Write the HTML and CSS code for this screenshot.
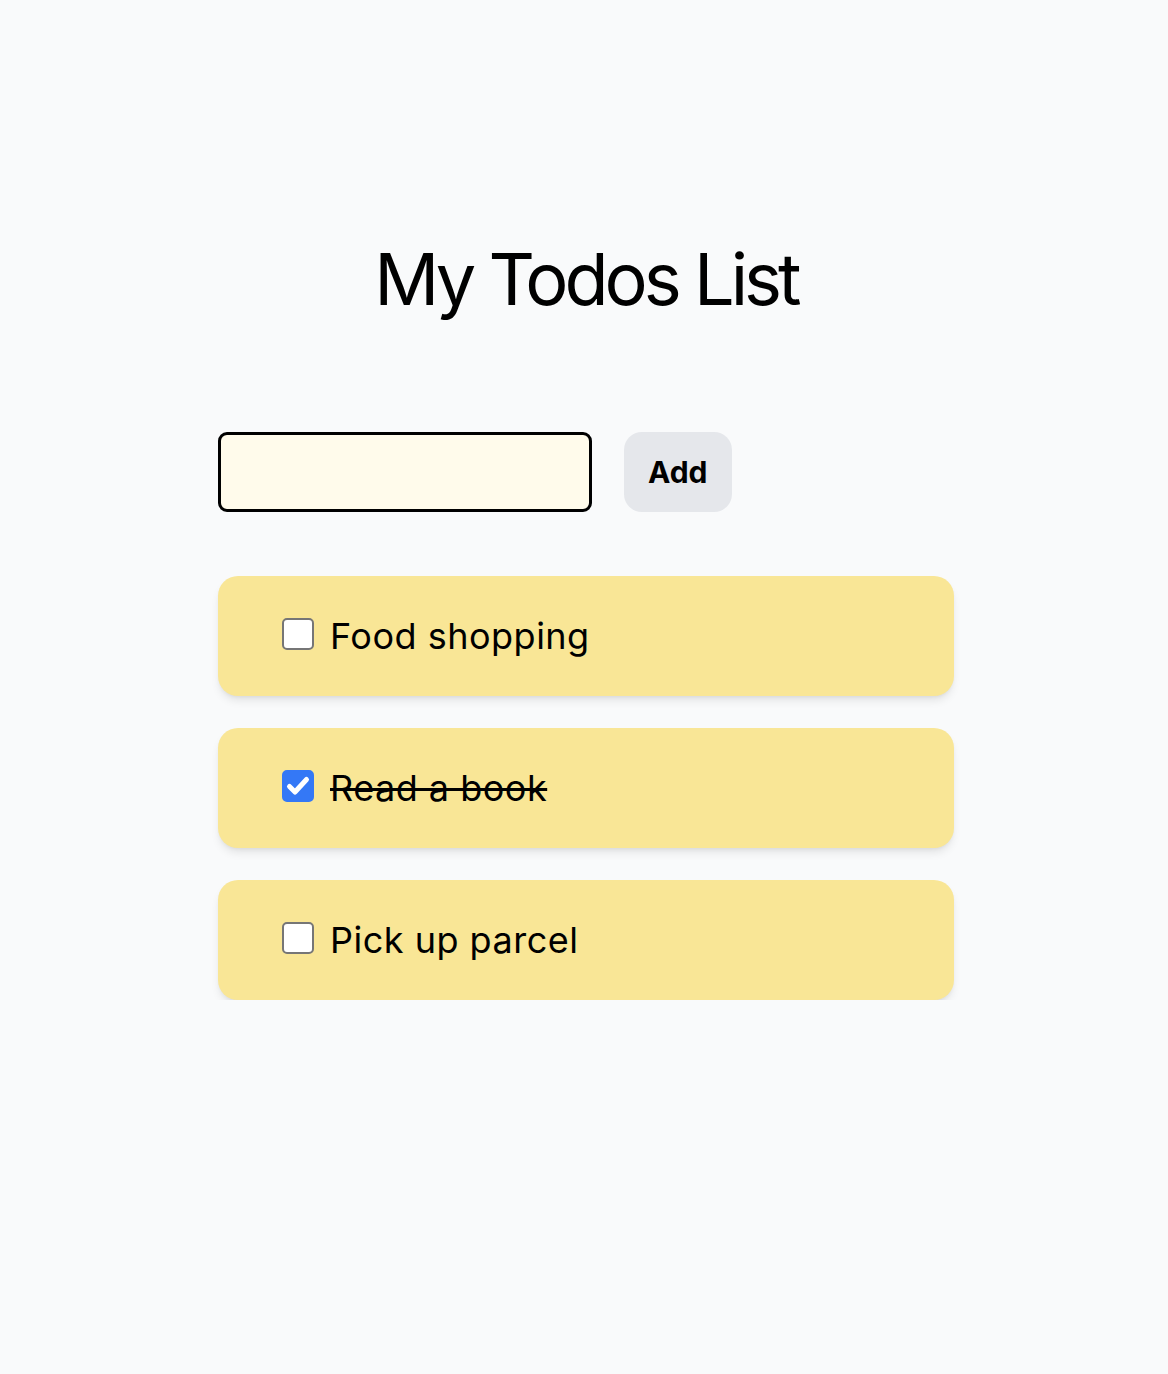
FILE: index.html
```html
<!DOCTYPE html>
<html lang="en">
<head>
<meta charset="utf-8">
<title>My Todos List</title>
<link rel="stylesheet" href="styles.css">
</head>
<body>
<main class="page">
  <h1 class="title">My Todos List</h1>
  <form class="add-form">
    <input class="add-input" type="text" aria-label="New todo">
    <button class="add-btn" type="button">Add</button>
  </form>
  <ul class="todos">
    <li class="todo">
      <label class="todo-label">
        <span class="check"><input class="check-input" type="checkbox"></span>
        <span class="todo-text">Food shopping</span>
      </label>
    </li>
    <li class="todo">
      <label class="todo-label">
        <span class="check"><input class="check-input" type="checkbox" checked>
          <svg class="check-mark" viewBox="0 0 32 32" aria-hidden="true"><path d="M7.5 16.5l5.5 5.5L24.5 9.5" fill="none" stroke="#fff" stroke-width="5" stroke-linecap="round" stroke-linejoin="round"/></svg>
        </span>
        <span class="todo-text done">Read a book</span>
      </label>
    </li>
    <li class="todo">
      <label class="todo-label">
        <span class="check"><input class="check-input" type="checkbox"></span>
        <span class="todo-text">Pick up parcel</span>
      </label>
    </li>
  </ul>
</main>
</body>
</html>
```
FILE: styles.css
```css
* { box-sizing: border-box; }
html, body { margin: 0; padding: 0; }
body {
  background: #f9fafb;
  font-family: Inter, "Noto Sans", "Liberation Sans", sans-serif;
  color: #000;
}
.page {
  width: 736px;
  margin: 0 auto;
  padding-top: 243px;
  position: relative;
  left: 2px;
}
.title {
  margin: 0 0 117px;
  font-size: 72px;
  line-height: 1;
  font-weight: 400;
  text-align: center;
  letter-spacing: -4px;
}
.add-form {
  display: flex;
  gap: 32px;
  margin: 0 0 64px;
}
.add-input {
  width: 374px;
  height: 80px;
  border: 3px solid #000;
  border-radius: 9px;
  background: #fffbeb;
  font-size: 30px;
  font-family: inherit;
  padding: 0 16px;
  outline: none;
}
.add-btn {
  height: 80px;
  padding: 0 24px;
  border: none;
  border-radius: 18px;
  background: #e5e7eb;
  font-family: inherit;
  font-size: 30px;
  font-weight: 700;
  color: #000;
}
.todos {
  list-style: none;
  margin: 0;
  padding: 0;
  display: flex;
  flex-direction: column;
  gap: 32px;
}
.todo {
  background: #f9e696;
  border-radius: 20px;
  padding: 40px 64px;
  box-shadow: 0 6px 10px -2px rgba(0,0,0,0.1), 0 2px 4px -2px rgba(0,0,0,0.08);
}
.todo-label {
  display: flex;
  align-items: center;
  gap: 16px;
}
.check {
  position: relative;
  width: 32px;
  height: 32px;
  flex: none;
  margin-top: -4px;
}
.check-input {
  appearance: none;
  -webkit-appearance: none;
  margin: 0;
  width: 32px;
  height: 32px;
  border: 2px solid #767676;
  border-radius: 5px;
  background: #fff;
  display: block;
}
.check-input:checked {
  background: #3478f6;
  border-color: #3478f6;
}
.check-mark {
  position: absolute;
  left: 0;
  top: 0;
  width: 32px;
  height: 32px;
  pointer-events: none;
}
.todo-text {
  font-size: 36px;
  line-height: 40px;
  letter-spacing: 0.5px;
}
.todo-text.done {
  text-decoration: line-through;
  text-decoration-thickness: 3px;
}
```
